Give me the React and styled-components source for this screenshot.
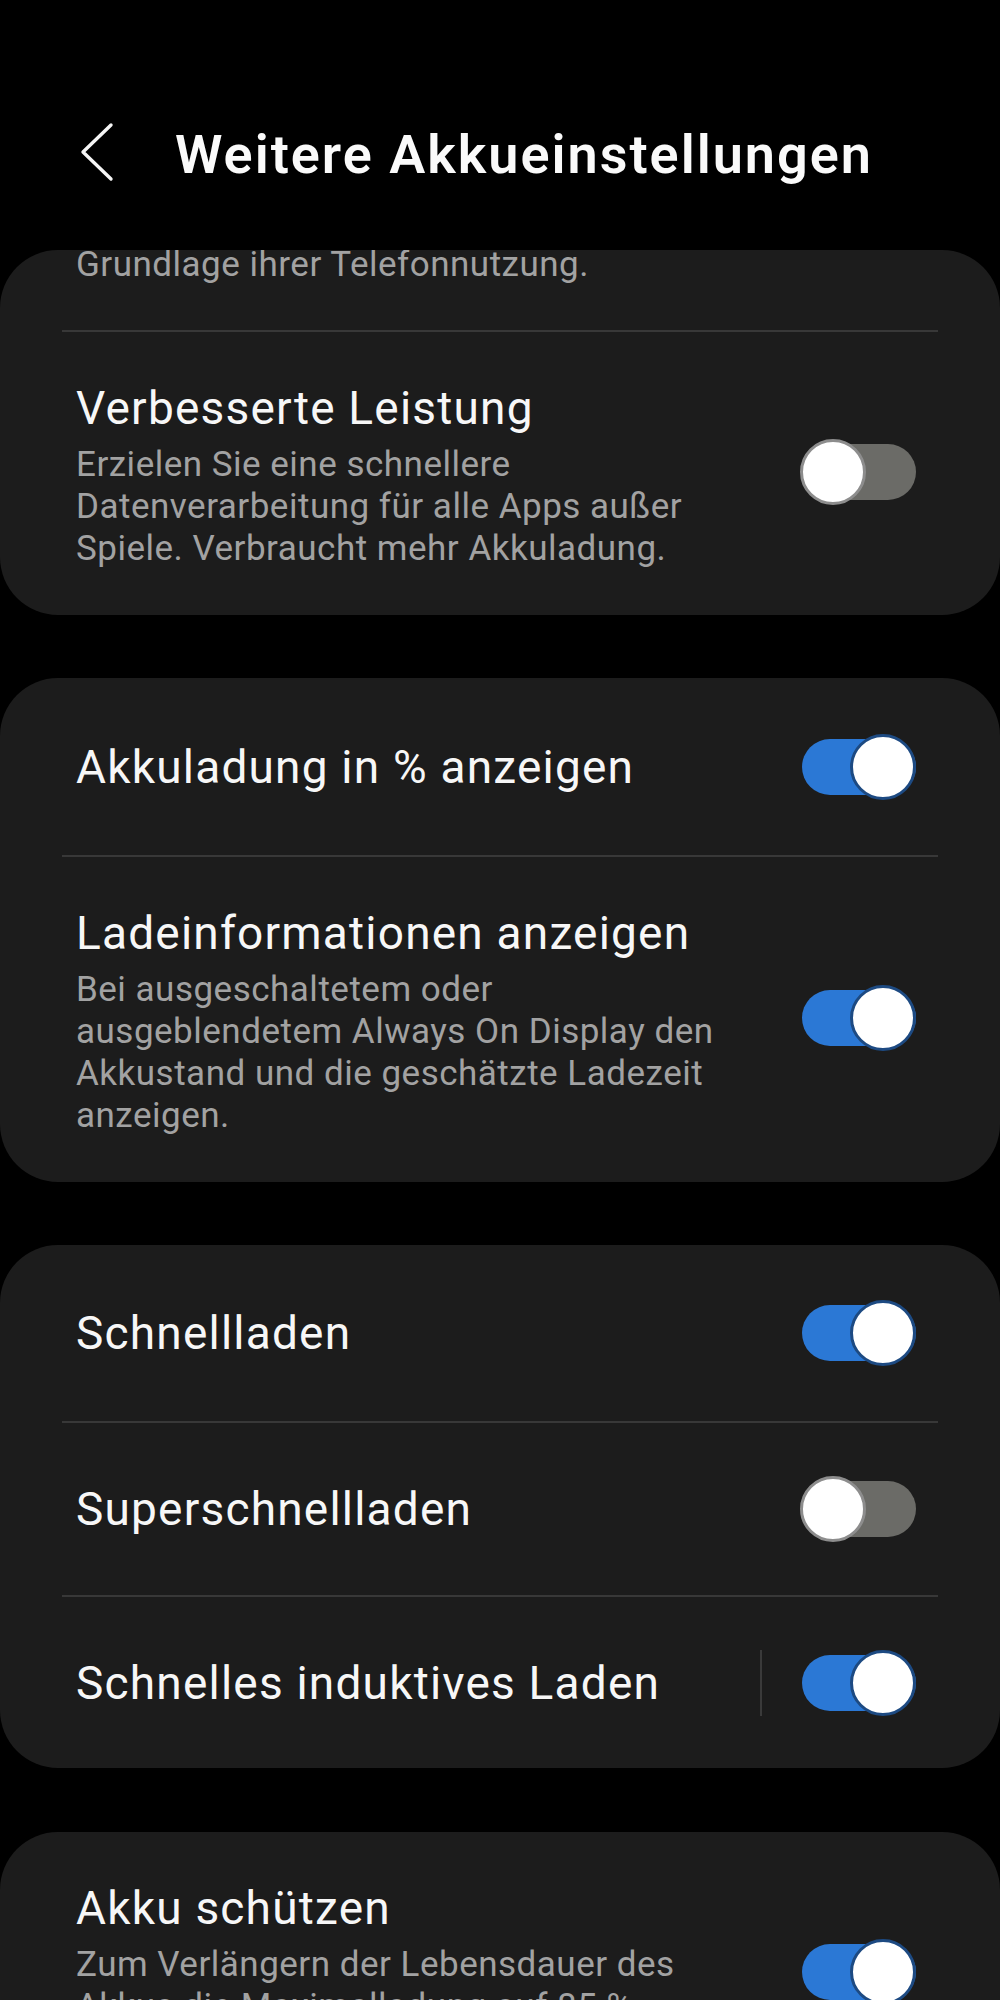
import React from 'react'
import styled, { createGlobalStyle } from 'styled-components'

const GlobalStyle = createGlobalStyle`
  html, body {
    margin: 0;
    padding: 0;
    background: #000;
  }
  body {
    font-family: Roboto, "Noto Sans", "Liberation Sans", sans-serif;
    -webkit-font-smoothing: antialiased;
  }
`

const sections = [
  {
    gap: 0,
    rows: [
      { lead: ['Grundlage ihrer Telefonnutzung.'] },
      {
        title: 'Verbesserte Leistung',
        desc: [
          'Erzielen Sie eine schnellere',
          'Datenverarbeitung für alle Apps außer',
          'Spiele. Verbraucht mehr Akkuladung.'
        ],
        on: false
      }
    ]
  },
  {
    gap: 63,
    rows: [
      { title: 'Akkuladung in % anzeigen', on: true, height: 177 },
      {
        title: 'Ladeinformationen anzeigen',
        desc: [
          'Bei ausgeschaltetem oder',
          'ausgeblendetem Always On Display den',
          'Akkustand und die geschätzte Ladezeit',
          'anzeigen.'
        ],
        on: true
      }
    ]
  },
  {
    gap: 63,
    rows: [
      { title: 'Schnellladen', on: true, height: 176 },
      { title: 'Superschnellladen', on: false, height: 172 },
      { title: 'Schnelles induktives Laden', on: true, height: 171, split: true }
    ]
  },
  {
    gap: 64,
    rows: [
      {
        title: 'Akku schützen',
        desc: [
          'Zum Verlängern der Lebensdauer des',
          'Akkus die Maximalladung auf 85 %',
          'begrenzen.'
        ],
        on: true
      }
    ]
  }
]

const Switch = ({ on, raised }) => (
  <SwitchBox $raised={raised}>
    <Track $on={on} />
    <Knob $on={on} />
  </SwitchBox>
)

const SettingRow = ({ row }) => {
  if (row.lead) {
    return (
      <Row $pad="0 84px 50px 76px">
        <TextCol>
          <Desc $tight>{row.lead.map((l, i) => <Line key={i}>{l}</Line>)}</Desc>
        </TextCol>
      </Row>
    )
  }
  if (!row.desc) {
    return (
      <Row $pad="0 84px 0 76px" $h={row.height}>
        <TextCol>
          <Title>{row.title}</Title>
        </TextCol>
        {row.split && <VSep />}
        <Switch on={row.on} />
      </Row>
    )
  }
  return (
    <Row $pad="50px 84px 45px 76px">
      <TextCol>
        <Title>{row.title}</Title>
        <Desc>{row.desc.map((l, i) => <Line key={i}>{l}</Line>)}</Desc>
      </TextCol>
      <Switch on={row.on} raised />
    </Row>
  )
}

export default function App() {
  return (
    <Page>
      <GlobalStyle />
      <Header>
        <Back width="34" height="60" viewBox="0 0 34 60">
          <path d="M31 3 L3 30 L31 57" fill="none" stroke="#f5f5f5" strokeWidth="3.4" strokeLinecap="round" strokeLinejoin="round" />
        </Back>
        <HeaderTitle>Weitere Akkueinstellungen</HeaderTitle>
      </Header>
      <List>
        {sections.map((s, si) => (
          <Card key={si} $gap={s.gap}>
            {s.rows.map((r, ri) => (
              <React.Fragment key={ri}>
                {ri > 0 && <Divider />}
                <SettingRow row={r} />
              </React.Fragment>
            ))}
          </Card>
        ))}
      </List>
    </Page>
  )
}

const Page = styled.div`
  width: 1000px;
  height: 2000px;
  overflow: hidden;
  background: #000;
`

const Header = styled.header`
  height: 250px;
  box-sizing: border-box;
  padding: 122px 0 0 80px;
  display: flex;
  align-items: flex-start;
`

const Back = styled.svg`
  flex: 0 0 auto;
  display: block;
`

const HeaderTitle = styled.h1`
  margin: 3px 0 0 61px;
  font-size: 54px;
  line-height: 60px;
  font-weight: 600;
  color: #fafafa;
  letter-spacing: 2px;
  white-space: nowrap;
`

const List = styled.div`
  display: flex;
  flex-direction: column;
`

const Card = styled.section`
  margin-top: ${p => p.$gap}px;
  background: #1c1c1c;
  border-radius: 58px;
  overflow: hidden;
`

const Row = styled.div`
  display: flex;
  align-items: center;
  box-sizing: border-box;
  padding: ${p => p.$pad};
  min-height: ${p => (p.$h ? `${p.$h}px` : 'auto')};
`

const TextCol = styled.div`
  flex: 1;
  display: flex;
  flex-direction: column;
  gap: 10px;
  min-width: 0;
`

const Title = styled.div`
  font-size: 46px;
  line-height: 52px;
  letter-spacing: 1.2px;
  color: #f7f7f7;
  white-space: nowrap;
`

const Desc = styled.div`
  font-size: 35px;
  line-height: ${p => (p.$tight ? '30px' : '42px')};
  letter-spacing: 0.5px;
  color: #a2a2a2;
`

const Line = styled.span`
  display: block;
  white-space: nowrap;
`

const Divider = styled.div`
  height: 2px;
  margin: 0 62px;
  background: #383838;
`

const VSep = styled.div`
  width: 2px;
  height: 66px;
  background: #3a3a3a;
  margin-right: 38px;
`

const SwitchBox = styled.div`
  position: relative;
  flex: 0 0 auto;
  width: 116px;
  height: 68px;
  margin-bottom: ${p => (p.$raised ? '8px' : '0')};
  display: flex;
  align-items: center;
  justify-content: flex-end;
`

const Track = styled.div`
  width: 114px;
  height: 56px;
  border-radius: 28px;
  background: ${p => (p.$on ? '#2b78d5' : '#6b6b67')};
`

const Knob = styled.div`
  position: absolute;
  top: 1px;
  left: ${p => (p.$on ? '50px' : '0')};
  width: 66px;
  height: 66px;
  box-sizing: border-box;
  border-radius: 50%;
  background: #fff;
  border: ${p => (p.$on ? '3px solid #1d4a82' : '3px solid #8d8d8d')};
`
